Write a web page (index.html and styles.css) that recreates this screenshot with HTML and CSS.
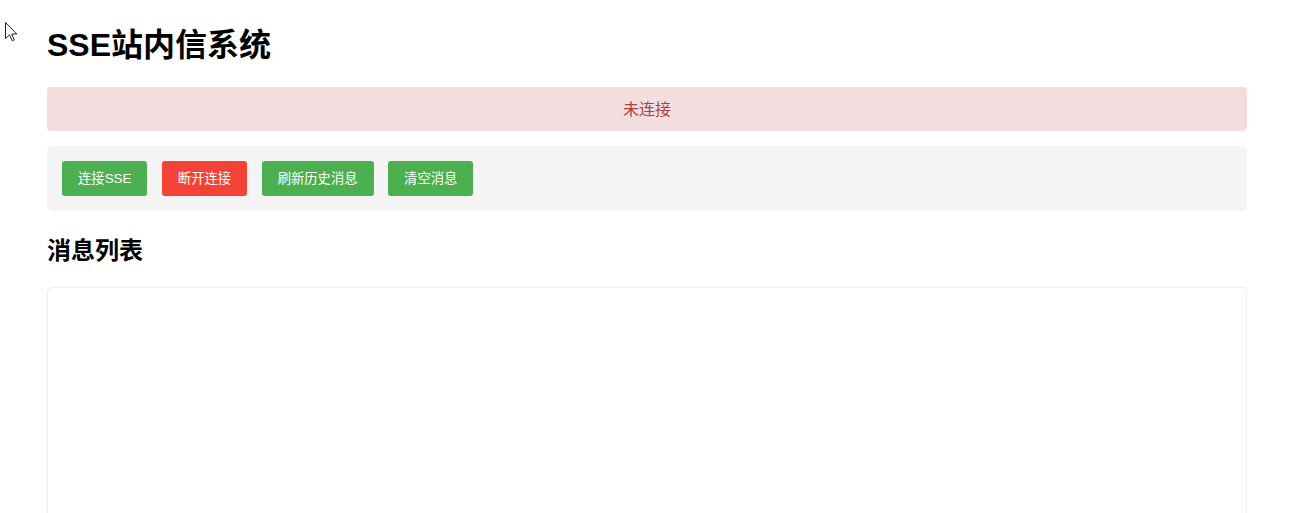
FILE: index.html
```html
<!DOCTYPE html>
<html lang="zh-CN">
<head>
<meta charset="utf-8">
<title>SSE站内信系统</title>
<link rel="stylesheet" href="styles.css">
</head>
<body>
<svg class="cursor" width="13" height="20" viewBox="0 0 13 20" aria-hidden="true">
  <path d="M0.5 0.5 L0.5 16.5 L4.5 12.8 L7.2 18.8 L9.3 17.9 L6.7 12 L11.8 12 Z" fill="#fff" stroke="#222" stroke-width="1" stroke-linejoin="miter"/>
</svg>
<div class="container">
  <h1 class="title">SSE站内信系统</h1>
  <div class="status">未连接</div>
  <div class="controls">
    <button class="btn btn-green">连接SSE</button>
    <button class="btn btn-red">断开连接</button>
    <button class="btn btn-green">刷新历史消息</button>
    <button class="btn btn-green">清空消息</button>
  </div>
  <h2 class="subtitle">消息列表</h2>
  <div class="messages"></div>
</div>
</body>
</html>
```
FILE: styles.css
```css
html, body {
  margin: 0;
  padding: 0;
  background: #fff;
}
body {
  font-family: "Liberation Sans", Arial, "Noto Sans CJK SC", sans-serif;
  color: #000;
  overflow: hidden;
  padding-left: 2px;
}
.cursor {
  position: absolute;
  left: 5px;
  top: 22px;
}
.container {
  max-width: 1200px;
  margin: 0 auto;
  padding: 0;
}
.title {
  font-size: 32px;
  font-weight: bold;
  line-height: 42px;
  margin: 24px 0 21px;
}
.status {
  background: #f2dede;
  color: #a94442;
  border-radius: 4px;
  height: 44px;
  line-height: 46px;
  text-align: center;
  font-size: 16px;
  margin-bottom: 15px;
}
.controls {
  background: #f4f4f4;
  border-radius: 5px;
  padding: 15px;
  display: flex;
  gap: 14.5px;
}
.btn {
  font-family: "Liberation Sans", Arial, "Noto Sans CJK SC", sans-serif;
  font-size: 13.333px;
  color: #fff;
  border: none;
  border-radius: 3px;
  padding: 0 16px;
  height: 35px;
  line-height: 36px;
  cursor: pointer;
}
.btn-green { background: #4caf50; }
.btn-red { background: #f44336; }
.subtitle {
  font-size: 24px;
  font-weight: bold;
  line-height: 32px;
  margin: 24px 0 20px;
}
.messages {
  border: 1px solid #eee;
  border-radius: 5px;
  height: 400px;
}
```
